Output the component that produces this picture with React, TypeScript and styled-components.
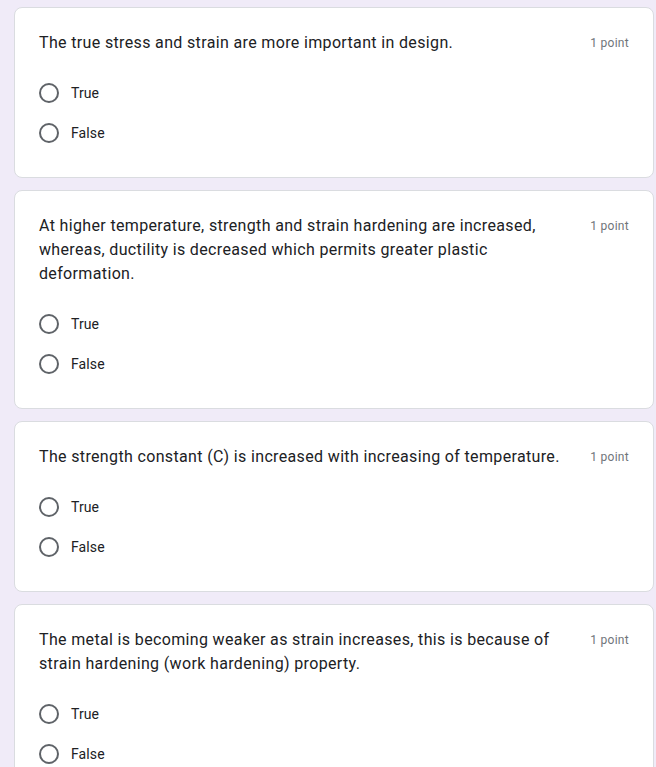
import React, { FC } from "react";
import styled, { createGlobalStyle } from "styled-components";

const GlobalStyle = createGlobalStyle`
  html, body {
    margin: 0;
    padding: 0;
    background: #f0ebf8;
  }
  body {
    font-family: Roboto, "Liberation Sans", Arial, sans-serif;
    color: #202124;
  }
`;

interface Question {
  text: string;
  points: string;
  options: string[];
}

const questions: Question[] = [
  {
    text: "The true stress and strain are more important in design.",
    points: "1 point",
    options: ["True", "False"],
  },
  {
    text: "At higher temperature, strength and strain hardening are increased, whereas, ductility is decreased which permits greater plastic deformation.",
    points: "1 point",
    options: ["True", "False"],
  },
  {
    text: "The strength constant (C) is increased with increasing of temperature.",
    points: "1 point",
    options: ["True", "False"],
  },
  {
    text: "The metal is becoming weaker as strain increases, this is because of strain hardening (work hardening) property.",
    points: "1 point",
    options: ["True", "False"],
  },
];

const QuestionCard: FC<{ q: Question }> = ({ q }) => {
  return (
    <Card>
      <Header>
        <Title>{q.text}</Title>
        <Points>{q.points}</Points>
      </Header>
      <Options>
        {q.options.map((opt) => (
          <Option key={opt}>
            <Radio />
            <Label>{opt}</Label>
          </Option>
        ))}
      </Options>
    </Card>
  );
};

const App: FC = () => {
  return (
    <>
      <GlobalStyle />
      <Page>
        {questions.map((q, i) => (
          <QuestionCard key={i} q={q} />
        ))}
      </Page>
    </>
  );
};

export default App;

const Page = styled.div`
  display: flex;
  flex-direction: column;
  gap: 12px;
  padding: 7px 2px 12px 14px;
`;

const Card = styled.div`
  background: #ffffff;
  border: 1px solid #dadce0;
  border-radius: 8px;
  padding: 23px 24px 24px 24px;
`;

const Header = styled.div`
  display: flex;
  align-items: flex-start;
  gap: 24px;
`;

const Title = styled.div`
  flex: 1;
  font-size: 16px;
  line-height: 24px;
  color: #202124;
  letter-spacing: 0.35px;
`;

const Points = styled.div`
  flex-shrink: 0;
  font-size: 12px;
  line-height: 24px;
  color: #70757a;
  letter-spacing: 0.3px;
`;

const Options = styled.div`
  margin-top: 18px;
  display: flex;
  flex-direction: column;
`;

const Option = styled.div`
  display: flex;
  align-items: center;
  height: 40px;
  gap: 12px;
`;

const Radio = styled.span`
  box-sizing: border-box;
  width: 20px;
  height: 20px;
  border: 2px solid #5f6368;
  border-radius: 50%;
  flex-shrink: 0;
`;

const Label = styled.span`
  font-size: 14px;
  color: #202124;
  letter-spacing: 0.1px;
`;
